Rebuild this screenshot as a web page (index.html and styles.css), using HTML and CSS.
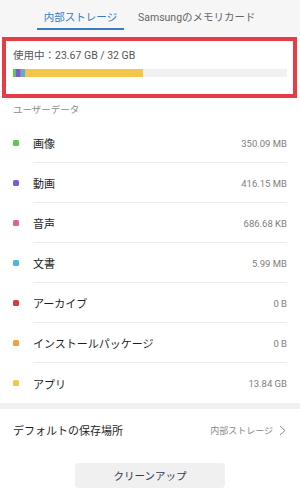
FILE: index.html
```html
<!DOCTYPE html>
<html lang="ja">
<head>
<meta charset="utf-8">
<link rel="stylesheet" href="styles.css">
</head>
<body>
<div class="tabs">
  <div class="tab active">内部ストレージ</div>
  <div class="tab">Samsungのメモリカード</div>
</div>
<div class="usage">
  <div class="usage-text">使用中：23.67 GB / 32 GB</div>
  <div class="bar">
    <span class="seg green" style="width:3px"></span>
    <span class="seg purple" style="width:4px"></span>
    <span class="seg pink" style="width:1px"></span>
    <span class="seg blue" style="width:4px"></span>
    <span class="seg yellow" style="width:118px"></span>
  </div>
</div>
<div class="section-title">ユーザーデータ</div>
<div class="list">
  <div class="row"><span class="dot green"></span><div class="row-main"><span class="label">画像</span><span class="value">350.09 MB</span></div></div>
  <div class="row"><span class="dot purple"></span><div class="row-main"><span class="label">動画</span><span class="value">416.15 MB</span></div></div>
  <div class="row"><span class="dot pink"></span><div class="row-main"><span class="label">音声</span><span class="value">686.68 KB</span></div></div>
  <div class="row"><span class="dot blue"></span><div class="row-main"><span class="label">文書</span><span class="value">5.99 MB</span></div></div>
  <div class="row"><span class="dot red"></span><div class="row-main"><span class="label">アーカイブ</span><span class="value">0 B</span></div></div>
  <div class="row"><span class="dot orange"></span><div class="row-main"><span class="label">インストールパッケージ</span><span class="value">0 B</span></div></div>
  <div class="row"><span class="dot yellow"></span><div class="row-main last"><span class="label">アプリ</span><span class="value">13.84 GB</span></div></div>
</div>
<div class="band"></div>
<div class="default-row">
  <span class="label">デフォルトの保存場所</span>
  <span class="default-value">内部ストレージ
    <svg class="chev" width="7" height="11" viewBox="0 0 7 11"><polyline points="1,1 6,5.5 1,10" fill="none" stroke="#8a8a8a" stroke-width="1"/></svg>
  </span>
</div>
<div class="btn-wrap">
  <div class="btn">クリーンアップ</div>
</div>
</body>
</html>
```
FILE: styles.css
```css
* { box-sizing: border-box; }
body {
  margin: 0;
  width: 300px;
  background: #fff;
  font-family: Roboto, "Noto Sans CJK JP", sans-serif;
  color: #222;
}
.tabs {
  height: 37px;
  background: #f6f6f6;
  display: flex;
  padding-left: 37px;
}
.tab {
  font-size: 10.5px;
  line-height: 14px;
  padding-top: 11px;
  color: #666;
}
.tab.active {
  width: 87px;
  text-align: center;
  color: #3a7cc4;
  height: 30px;
  border-bottom: 2px solid #3a7cc4;
}
.tab + .tab { margin-left: 14px; }
.usage {
  margin-left: 2px;
  width: 295px;
  height: 61px;
  border: 4px solid #e53c46;
  background: #fff;
  padding: 8px 6px 0 7px;
}
.usage-text {
  font-size: 10.5px;
  line-height: 14px;
  color: #555;
}
.bar {
  margin-top: 6px;
  height: 8px;
  background: #f0f0f0;
  display: flex;
}
.seg { display: block; height: 100%; }
.green { background: #5cc64f; }
.purple { background: #7d5bd6; }
.pink { background: #e0609b; }
.blue { background: #4cb5dc; }
.red { background: #d93a3c; }
.orange { background: #f0a03a; }
.yellow { background: #f5c54a; }
.section-title {
  height: 25px;
  padding: 5px 0 0 13px;
  font-size: 9.5px;
  line-height: 14px;
  color: #8a8a8a;
}
.row {
  display: flex;
  align-items: center;
  height: 40px;
}
.dot {
  width: 6px;
  height: 6px;
  border-radius: 1.5px;
  margin-left: 13px;
  margin-right: 14px;
  flex: none;
}
.row-main {
  flex: 1;
  margin-right: 13px;
  height: 40px;
  display: flex;
  align-items: center;
  justify-content: space-between;
  border-bottom: 1px solid #ececec;
  padding-top: 1px;
}
.row-main.last { border-bottom: none; }
.label {
  font-size: 11px;
  color: #1e1e1e;
}
.value {
  font-size: 9.5px;
  color: #808080;
}
.band {
  height: 6px;
  background: #f1f1f1;
}
.default-row {
  height: 42px;
  display: flex;
  align-items: center;
  justify-content: space-between;
  padding: 0 14px 0 13px;
}
.default-value {
  font-size: 9px;
  color: #888;
  display: flex;
  align-items: center;
  gap: 6px;
}
.btn-wrap {
  display: flex;
  justify-content: center;
  padding-top: 12px;
}
.btn {
  width: 150px;
  height: 25px;
  border-radius: 4px;
  background: #f0f0f0;
  display: flex;
  align-items: center;
  justify-content: center;
  font-size: 10.5px;
  color: #2f3d55;
}
```
